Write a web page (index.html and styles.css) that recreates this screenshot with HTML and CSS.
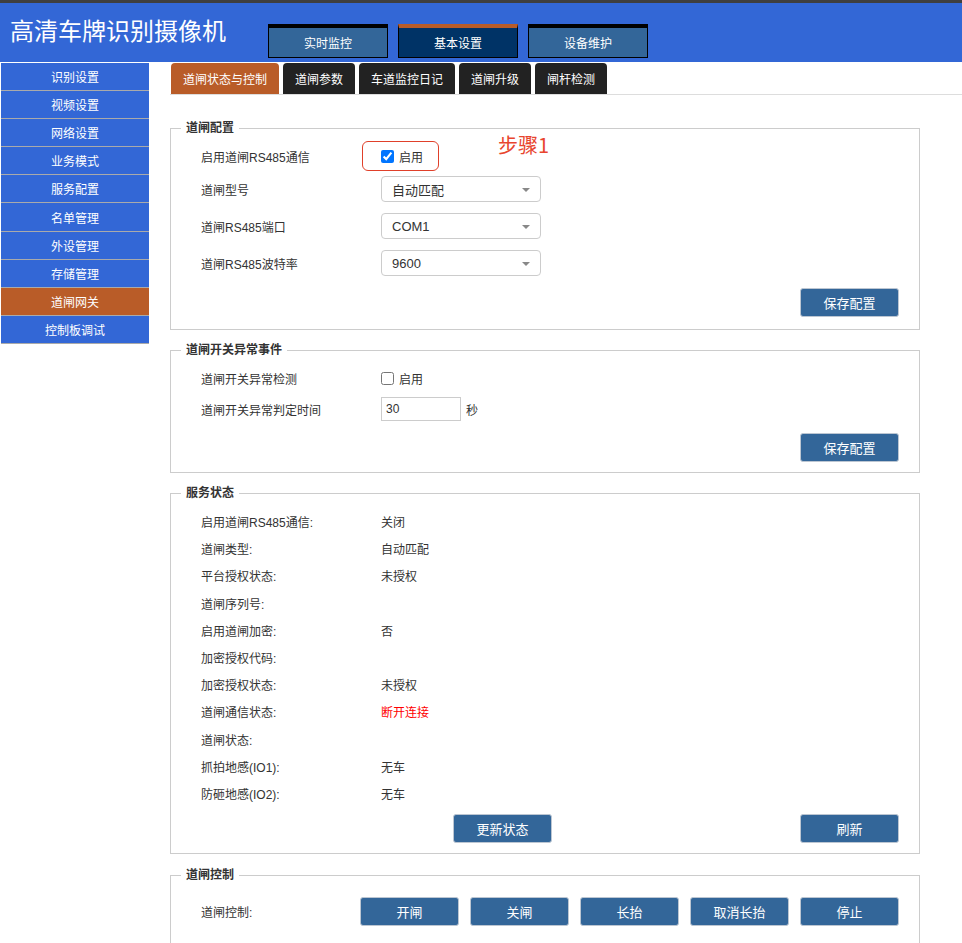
FILE: index.html
```html
<!DOCTYPE html>
<html lang="zh-CN">
<head>
<meta charset="utf-8">
<title>高清车牌识别摄像机</title>
<link rel="stylesheet" href="styles.css">
</head>
<body>
<div class="topline"></div>
<header class="header">
  <h1 class="title">高清车牌识别摄像机</h1>
  <nav class="topnav">
    <a class="topbtn">实时监控</a>
    <a class="topbtn active">基本设置</a>
    <a class="topbtn">设备维护</a>
  </nav>
</header>
<div class="layout">
  <aside class="sidebar">
    <a class="side-item">识别设置</a>
    <a class="side-item">视频设置</a>
    <a class="side-item">网络设置</a>
    <a class="side-item">业务模式</a>
    <a class="side-item">服务配置</a>
    <a class="side-item">名单管理</a>
    <a class="side-item">外设管理</a>
    <a class="side-item">存储管理</a>
    <a class="side-item active">道闸网关</a>
    <a class="side-item">控制板调试</a>
  </aside>
  <main class="main">
    <ul class="tabs">
      <li class="tab active">道闸状态与控制</li>
      <li class="tab">道闸参数</li>
      <li class="tab">车道监控日记</li>
      <li class="tab">道闸升级</li>
      <li class="tab">闸杆检测</li>
    </ul>

    <fieldset class="box box-config">
      <legend>道闸配置</legend>
      <div class="row r1">
        <span class="label">启用道闸RS485通信</span>
        <span class="value mark">
          <span class="annot-box"></span>
          <input type="checkbox" class="chk" checked><span class="chk-text">启用</span>
          <span class="annot-text">步骤1</span>
        </span>
      </div>
      <div class="row r2">
        <span class="label">道闸型号</span>
        <span class="select">自动匹配</span>
      </div>
      <div class="row r3">
        <span class="label">道闸RS485端口</span>
        <span class="select">COM1</span>
      </div>
      <div class="row r3">
        <span class="label">道闸RS485波特率</span>
        <span class="select">9600</span>
      </div>
      <div class="btnrow br1">
        <button class="btn">保存配置</button>
      </div>
    </fieldset>

    <fieldset class="box box-event">
      <legend>道闸开关异常事件</legend>
      <div class="row e1">
        <span class="label">道闸开关异常检测</span>
        <span class="value"><input type="checkbox" class="chk"><span class="chk-text">启用</span></span>
      </div>
      <div class="row e2">
        <span class="label">道闸开关异常判定时间</span>
        <span class="value"><input type="text" class="num" value="30"><span class="unit">秒</span></span>
      </div>
      <div class="btnrow br2">
        <button class="btn">保存配置</button>
      </div>
    </fieldset>

    <fieldset class="box box-status">
      <legend>服务状态</legend>
      <div class="status">
        <div class="srow"><span class="label">启用道闸RS485通信:</span><span class="sval">关闭</span></div>
        <div class="srow"><span class="label">道闸类型:</span><span class="sval">自动匹配</span></div>
        <div class="srow"><span class="label">平台授权状态:</span><span class="sval">未授权</span></div>
        <div class="srow"><span class="label">道闸序列号:</span><span class="sval"></span></div>
        <div class="srow"><span class="label">启用道闸加密:</span><span class="sval">否</span></div>
        <div class="srow"><span class="label">加密授权代码:</span><span class="sval"></span></div>
        <div class="srow"><span class="label">加密授权状态:</span><span class="sval">未授权</span></div>
        <div class="srow"><span class="label">道闸通信状态:</span><span class="sval red">断开连接</span></div>
        <div class="srow"><span class="label">道闸状态:</span><span class="sval"></span></div>
        <div class="srow"><span class="label">抓拍地感(IO1):</span><span class="sval">无车</span></div>
        <div class="srow"><span class="label">防砸地感(IO2):</span><span class="sval">无车</span></div>
      </div>
      <div class="btnrow br3">
        <button class="btn">更新状态</button>
        <button class="btn">刷新</button>
      </div>
    </fieldset>

    <fieldset class="box box-control">
      <legend>道闸控制</legend>
      <div class="ctrlrow">
        <span class="label ctrl-label">道闸控制:</span>
        <div class="ctrlbtns">
          <button class="btn">开闸</button>
          <button class="btn">关闸</button>
          <button class="btn">长抬</button>
          <button class="btn">取消长抬</button>
          <button class="btn">停止</button>
        </div>
      </div>
    </fieldset>
  </main>
</div>
</body>
</html>
```

FILE: styles.css
```css
* { box-sizing: border-box; }
html, body { margin: 0; padding: 0; background: #fff; }
body {
  font-family: "Liberation Sans", "Noto Sans CJK SC", sans-serif;
  font-size: 12px;
  color: #333;
  width: 962px;
  overflow: hidden;
}
.topline { height: 3px; background: #3f3f3f; }
.header {
  height: 59px;
  background: #3367d6;
  display: flex;
  align-items: flex-start;
  padding-left: 10px;
}
.title {
  margin: 12px 0 0 0;
  font-family: "Noto Sans CJK SC", sans-serif;
  font-size: 24px;
  line-height: 30px;
  font-weight: normal;
  color: #fff;
  letter-spacing: 0;
}
.topnav { display: flex; gap: 10px; margin: 21px 0 0 42px; }
.topbtn {
  width: 120px;
  height: 34px;
  display: flex;
  align-items: center;
  justify-content: center;
  background: #336699;
  border: 1px solid #000;
  border-top: 4px solid #000;
  color: #fff;
  font-family: "Noto Sans CJK SC", sans-serif;
  font-size: 12px;
}
.topbtn.active { background: #003366; border-top-color: #b95c28; }

.layout { display: flex; align-items: flex-start; }
.sidebar {
  width: 148px;
  margin: 1px 0 0 1px;
  display: flex;
  flex-direction: column;
}
.side-item {
  height: 28.1px;
  display: flex;
  align-items: center;
  justify-content: center;
  background: #3367d6;
  color: #fff;
  border-bottom: 1px solid #aaa;
  font-family: "Noto Sans CJK SC", sans-serif;
  font-size: 12px;
}
.side-item.active { background: #b95c28; }

.main { flex: 1; margin-left: 21px; }
.tabs {
  list-style: none;
  margin: 1px 0 0 0;
  padding: 0 0 0 1px;
  display: flex;
  gap: 4px;
  border-bottom: 1px solid #ddd;
}
.tab {
  height: 31px;
  padding: 0 12px;
  display: flex;
  align-items: center;
  background: #222;
  color: #fff;
  border-radius: 4px 4px 0 0;
  font-family: "Noto Sans CJK SC", sans-serif;
  font-size: 12px;
}
.tab.active { background: #b95c28; }

.box {
  width: 750px;
  margin: 12px 0 0 0;
  padding: 0 20px 10px 0;
  border: 1px solid #ccc;
  min-inline-size: 0;
}
.box-config { margin-top: 25px; padding-bottom: 12px; }
.box-status { margin-top: 12px; }
.box-control { margin-top: 13px; padding-bottom: 30px; }
.box legend {
  margin-left: 10px;
  padding: 0 5px;
  font-weight: bold;
  font-size: 12px;
  line-height: 16px;
  color: #333;
  font-family: "Liberation Sans", "Noto Sans CJK SC", sans-serif;
}

.row { display: flex; align-items: center; height: 26px; }
.r1 { margin-top: 7px; }
.r2 { margin-top: 7px; }
.r3 { margin-top: 11px; }
.e1 { margin-top: 7px; }
.e2 { margin-top: 5px; }
.label { width: 180px; margin-left: 30px; flex: none; }
.value { display: flex; align-items: center; }
.mark { position: relative; height: 26px; }

.chk { width: 13px; height: 13px; margin: 0; accent-color: #0075ff; }
.chk-text { margin-left: 5px; }
.annot-box {
  position: absolute;
  left: -19px;
  top: -2px;
  width: 77px;
  height: 30px;
  border: 1px solid #e0402a;
  border-radius: 6px;
}
.annot-text {
  position: absolute;
  left: 117px;
  top: -10px;
  font-family: "Noto Sans CJK SC", sans-serif;
  font-size: 20px;
  line-height: 24px;
  color: #e8452e;
  white-space: nowrap;
}

.select {
  position: relative;
  width: 160px;
  height: 26px;
  border: 1px solid #ccc;
  border-radius: 4px;
  padding-left: 10px;
  display: flex;
  align-items: center;
  font-size: 13px;
  color: #333;
  background: #fff;
}
.select::after {
  content: "";
  position: absolute;
  right: 10px;
  top: 11px;
  border-left: 4px solid transparent;
  border-right: 4px solid transparent;
  border-top: 4px solid #888;
}
.num {
  width: 80px;
  height: 24px;
  border: 1px solid #ccc;
  padding: 0 0 0 4px;
  margin: 0;
  font-family: "Liberation Sans", sans-serif;
  font-size: 12px;
  color: #333;
}
.unit { margin-left: 5px; }

.btnrow { display: flex; justify-content: flex-end; }
.br1 { margin-top: 12px; }
.br2 { margin-top: 11px; }
.br3 { margin-top: 7px; justify-content: space-between; padding-left: 282px; }
.btn {
  width: 99px;
  height: 29px;
  padding: 0;
  background: #336699;
  border: 1px solid #bcc6d2;
  border-radius: 3px;
  color: #fff;
  font-family: "Noto Sans CJK SC", sans-serif;
  font-size: 13px;
}

.status { margin-top: 7px; }
.srow { display: flex; align-items: center; height: 27.2px; }
.sval { flex: none; }
.red { color: #ff0000; }

.ctrlrow { display: flex; align-items: center; margin-top: 14px; }
.ctrl-label { width: 159px; }
.ctrlbtns { display: flex; gap: 11px; }
```
